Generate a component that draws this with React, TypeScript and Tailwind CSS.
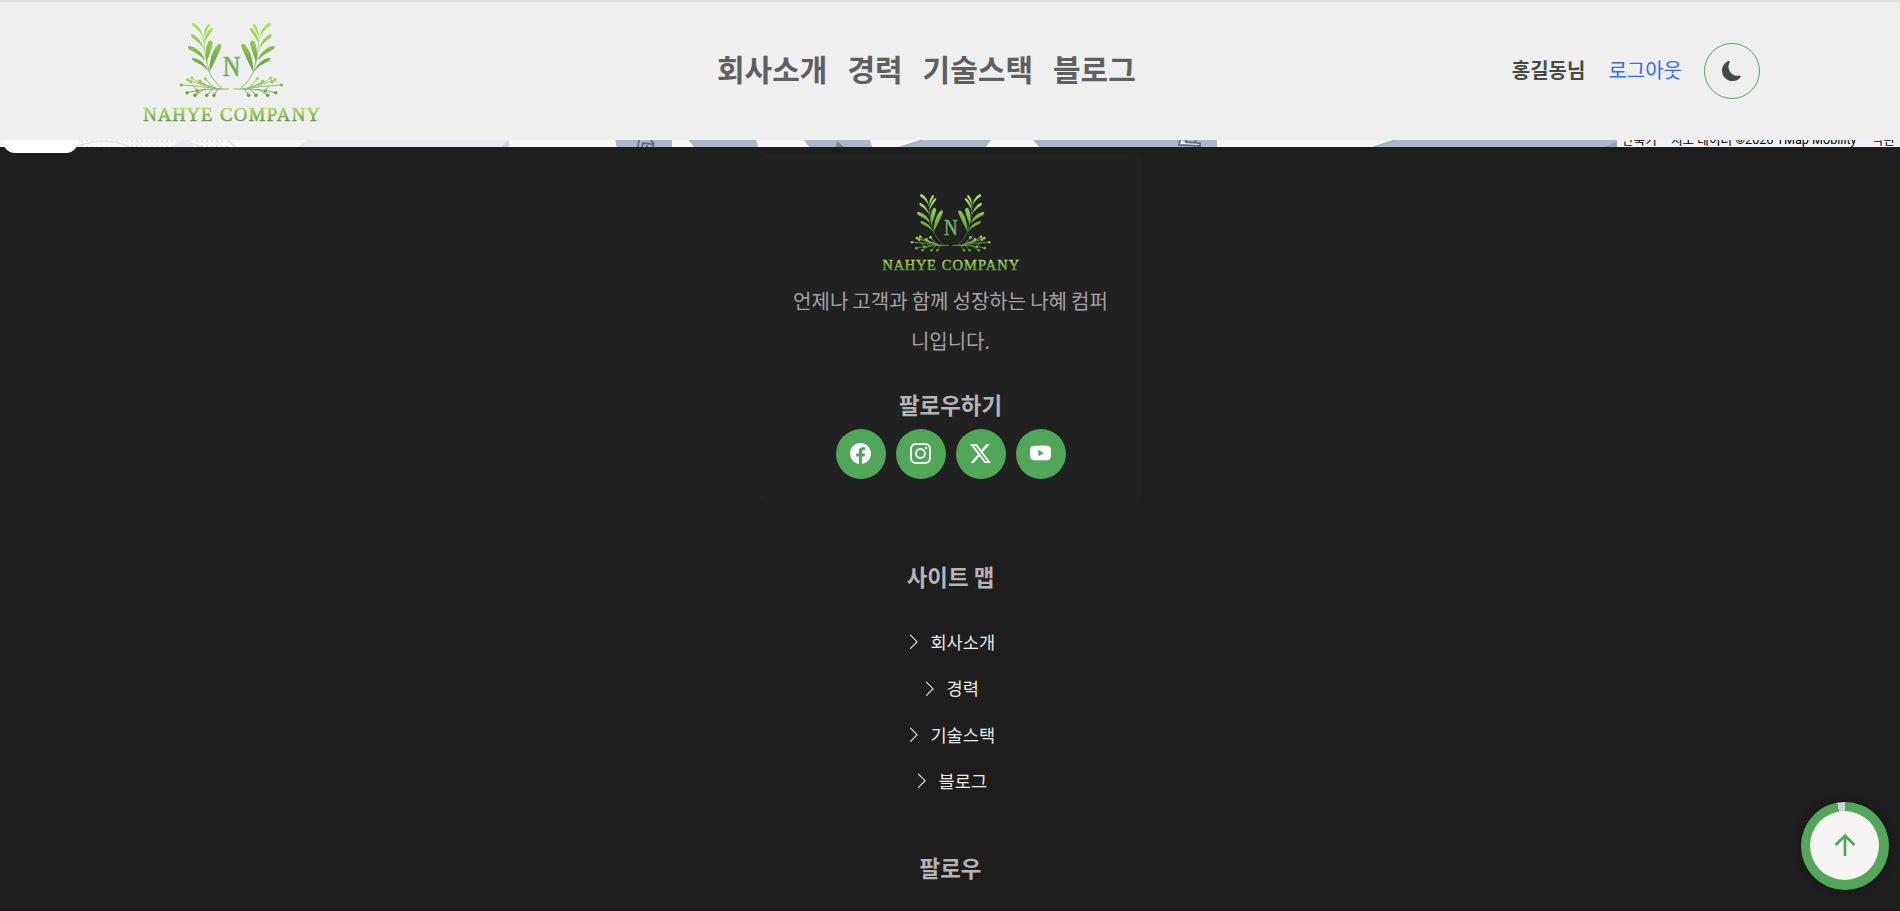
import type { ReactNode } from "react";
import { BsChevronRight, BsFacebook, BsInstagram, BsMoonFill, BsTwitterX, BsYoutube } from "react-icons/bs";

const MENU = ["회사소개", "경력", "기술스택", "블로그"];

const BERRIES = [
  [24, 255], [43, 239], [56, 234], [52, 245], [80, 244], [96, 236],
  [41, 278], [65, 286], [72, 273], [100, 286], [122, 286],
];

function Branch({ id }: { id: string }) {
  return (
    <g fill={`url(#${id}-leaf)`}>
      <path d="M147 267Q118 240 108 216Q92 160 90 110" fill="none" stroke={`url(#${id}-leaf)`} strokeWidth="2" />
      <path d="M91 118Q82 92 57 77Q52 68 62 69Q83 78 91 118Z" />
      <path d="M91 112Q91 84 105 72Q111 69 109 78Q104 84 91 112Z" />
      <path d="M92 130Q95 98 113 84Q121 82 117 92Q107 103 92 130Z" />
      <path d="M93 152Q82 128 56 113Q49 104 57 102Q81 111 93 152Z" />
      <path d="M97 182Q76 162 46 148Q40 137 49 137Q80 144 97 182Z" />
      <path d="M99 188Q93 148 105 124Q116 117 118 129Q115 148 99 188Z" />
      <path d="M108 216Q108 162 134 133Q146 128 144 140Q136 162 108 216Z" />
      <path d="M107 216Q94 197 61 183Q52 174 60 173Q92 179 107 216Z" />
      <path
        d="M166 267H130Q95 259 24 255M140 267Q80 267 42 278M128 264Q98 258 76 244M107 259Q85 254 55 234M93 256Q72 250 44 240M120 263L96 236M95 267L65 285M118 267L100 286M134 267L122 286M110 261L80 246M60 257L72 273"
        fill="none"
        stroke={`url(#${id}-berry)`}
        strokeWidth="2.8"
        strokeLinecap="round"
      />
      {BERRIES.map(([x, y]) => (
        <circle key={`${x}-${y}`} cx={x} cy={y} r="5.2" fill={`url(#${id}-berry)`} />
      ))}
    </g>
  );
}

function Logo({ id, className }: { id: string; className: string }) {
  return (
    <svg viewBox="30 60 546 312" className={className}>
      <defs>
        <linearGradient id={`${id}-leaf`} gradientUnits="userSpaceOnUse" x1="0" y1="68" x2="0" y2="217">
          <stop offset="0" stopColor="#b8e466" />
          <stop offset="0.4" stopColor="#92ca50" />
          <stop offset="1" stopColor="#5f9a40" />
        </linearGradient>
        <linearGradient id={`${id}-berry`} gradientUnits="userSpaceOnUse" x1="0" y1="230" x2="0" y2="290">
          <stop offset="0" stopColor="#aadc5f" />
          <stop offset="1" stopColor="#5d9a40" />
        </linearGradient>
        <linearGradient id={`${id}-word`} gradientUnits="userSpaceOnUse" x1="0" y1="322" x2="0" y2="364">
          <stop offset="0" stopColor="#b3e062" />
          <stop offset="1" stopColor="#609c42" />
        </linearGradient>
      </defs>
      <g transform="translate(130 0)">
        <Branch id={id} />
      </g>
      <g transform="translate(478 0) scale(-1 1)">
        <Branch id={id} />
      </g>
      <text x="278" y="228" fontSize="86" textLength="53" lengthAdjust="spacingAndGlyphs" fill="#74b15f" stroke="#74b15f" strokeWidth="2" fontFamily="'Liberation Serif', serif">
        N
      </text>
      <g fontSize="56" fill={`url(#${id}-word)`} stroke={`url(#${id}-word)`} strokeWidth="1.6" fontFamily="'Liberation Serif', serif">
        <text x="40" y="362" textLength="207" lengthAdjust="spacing">NAHYE</text>
        <text x="270" y="362" textLength="300" lengthAdjust="spacing">COMPANY</text>
      </g>
    </svg>
  );
}

function Header() {
  return (
    <header className="flex h-[140px] items-start border-t-2 border-[#e0e0e0] bg-[#efefef]">
      <div className="w-[717px] pt-[18px] pl-[140px]">
        <Logo id="top" className="h-[104px] w-[182px]" />
      </div>
      <nav className="flex h-[133px] flex-1 items-center gap-5 text-[30px] font-bold text-[#5f5f5f]">
        {MENU.map((m) => (
          <a key={m}>{m}</a>
        ))}
      </nav>
      <div className="flex h-[138px] items-center pr-[140px] text-[20px]">
        <span className="pb-[2px] font-bold text-[#444b45]">홍길동님</span>
        <a className="ml-[23px] pb-[2px] text-[#2f6bff]">로그아웃</a>
        <button className="ml-[22px] flex size-14 items-center justify-center rounded-full border border-[#4fa85a] text-[#444b45]">
          <BsMoonFill size={20} />
        </button>
      </div>
    </header>
  );
}

function MapStrip() {
  return (
    <section className="relative h-[7px] bg-[#f7f7f7]">
      <svg width="1900" height="7" viewBox="0 0 1900 7" className="block">
        <defs>
          <pattern id="dots" width="5" height="5" patternUnits="userSpaceOnUse">
            <circle cx="2" cy="1.2" r="0.9" fill="#dfdfe2" />
          </pattern>
        </defs>
        <rect x="78" width="152" height="7" fill="url(#dots)" />
        <path d="M78 6Q105 -4 130 7" fill="#f5f5f5" stroke="#dadadd" strokeWidth="1.2" />
        <path d="M172 7L180 0H189L194 7Z" fill="#e6e8ee" />
        <path d="M190 3L203 7M228 0L235 7" stroke="#dcdce0" strokeWidth="1.3" />
        <path d="M298 7L307 0H509V7Z" fill="#e7e9ee" />
        <path d="M501 7L509 0V7Z" fill="#d2d6dc" />
        <g fill="#abb8c7">
          <path d="M615.5 0H672V7H616.5Z" />
          <path d="M688.6 0H756L758 7H694Z" />
          <path d="M804 0H870L872 7H809Z" />
          <path d="M900 7L922 0H991L986 7Z" />
          <path d="M1033 0H1217V7H1039Z" />
          <path d="M1373 7L1395 0H1617V7Z" />
        </g>
        <path d="M837 1L844 7H836Z" fill="#7d8894" />
        <g fill="none" stroke="#5f6f8b" strokeWidth="1.8">
          <path d="M638 7L639 0M642 7L643 3L653 4L653 7M647 5V7M651 0L654 4" />
          <path d="M1180 0L1179 5L1200 6V3L1185 2M1186 0V3M1196 0L1195 3" fill="#f2f4f7" />
        </g>
        <path d="M900 7L922 0M1373 7L1395 0" stroke="#97a6ba" strokeWidth="1" />
        <path d="M1605 7L1617 1V7Z" fill="#93a4ba" />
        <rect x="1617" width="283" height="7" fill="#f0f2f5" />
      </svg>
      <div className="absolute inset-0 overflow-hidden font-[Roboto,'Noto_Sans_CJK_KR',sans-serif] text-[12.6px] leading-[7px] text-black">
        <div className="-mt-[4px] flex justify-end whitespace-nowrap">
          <span className="w-[49px]">단축키</span>
          <span className="w-[201px]">지도 데이터 ©2026 TMap Mobility</span>
          <span className="w-[28px]">약관</span>
        </div>
      </div>
      <div className="absolute top-0 left-[3px] h-[13px] w-[75px] rounded-b-[12px] bg-white" />
    </section>
  );
}

function SocialButton({ children }: { children: ReactNode }) {
  return <a className="flex size-[50px] items-center justify-center rounded-full bg-[#51a759] pr-px text-[21px] text-white">{children}</a>;
}

function Footer() {
  return (
    <footer className="flex flex-1 flex-col items-center border-b border-[#191416] bg-[#1e1e1e] pt-[7px] pl-px text-center">
      <section className="flex h-[350px] w-[383px] shrink-0 flex-col items-center rounded-lg bg-[#212121] pt-[37.6px]">
        <Logo id="foot" className="h-[80.4px] w-[140.7px]" />
        <p className="mt-[9.4px] text-[20px] leading-10 [word-spacing:-0.4px] text-[#a3a3a3]">
          언제나 고객과 함께 성장하는 나혜 컴퍼
          <br />
          니입니다.
        </p>
        <h3 className="mt-[27.6px] text-[22.4px] leading-[30px] font-bold text-[#b5b5b5]">팔로우하기</h3>
        <div className="mt-[10px] flex gap-[10px]">
          <SocialButton><BsFacebook /></SocialButton>
          <SocialButton><BsInstagram /></SocialButton>
          <SocialButton><BsTwitterX /></SocialButton>
          <SocialButton><BsYoutube /></SocialButton>
        </div>
      </section>
      <h3 className="mt-[57px] text-[22.4px] leading-[30px] font-bold text-[#b5b5b5]">사이트 맵</h3>
      <ul className="mt-[28px] flex flex-col items-center pr-px text-[17.6px] text-[#e9e9e9]">
        {MENU.map((m) => (
          <li key={m} className="flex h-[46.3px] items-center gap-2">
            <BsChevronRight />
            <span>{m}</span>
          </li>
        ))}
      </ul>
      <h3 className="mt-[48px] text-[22.4px] leading-[30px] font-bold text-[#b5b5b5]">팔로우</h3>
    </footer>
  );
}

function ScrollTop() {
  return (
    <button className="fixed right-[11px] bottom-[21.5px] flex size-[88px] items-center justify-center rounded-full bg-[conic-gradient(#53a75a_0_97.2%,#d2d2d2_97.2%_100%)] pr-px shadow-[0_0_10px_rgba(0,0,0,0.3)]">
      <span className="flex size-[69px] items-center justify-center rounded-full bg-[#f7f5f4] pb-[2px] pl-px">
        <svg width="22" height="24" viewBox="0 0 22 24" fill="none" stroke="#4ea659" strokeWidth="2.7">
          <path d="M11 23V2.4M1.6 12L11 2.6L20.4 12" />
        </svg>
      </span>
    </button>
  );
}

export default function App() {
  return (
    <div className="flex h-[911px] flex-col overflow-hidden bg-[#1e1e1e] font-['Noto_Sans_CJK_KR','Noto_Sans',sans-serif]">
      <Header />
      <MapStrip />
      <Footer />
      <ScrollTop />
    </div>
  );
}
